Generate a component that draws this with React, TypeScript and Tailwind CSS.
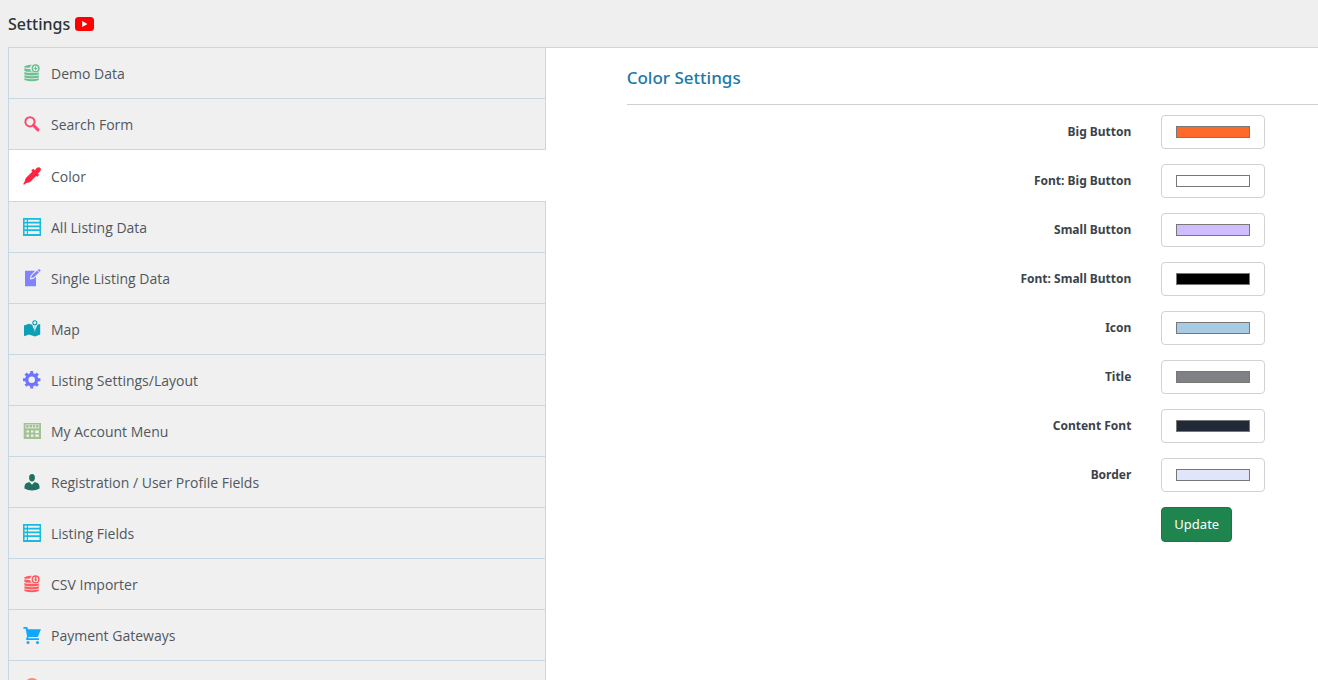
import React from "react";

type IconProps = { children: React.ReactNode; color: string };

function Icon({ children, color }: IconProps) {
  return (
    <svg viewBox="0 0 18 18" className="size-[18px] shrink-0" fill={color} stroke="none" style={{ color }} aria-hidden="true">
      {children}
    </svg>
  );
}

const Coins = ({ plus }: { plus: boolean }) => (
  <>
    <path d="M1.4 2.2Q4 .4 8.8 .7Q7.2 2.2 7.1 3.4Q4 4 1.4 3.4Z" />
    <path d="M1.4 4.3Q4 5.2 7.2 4.9Q7.6 6.8 9 7.8Q4 8.1 1.4 7Z" />
    <path d="M1.4 7.9Q5 9.2 9.6 8.6Q13 9.8 15.8 8.2V10.6Q9 12.6 1.4 10.6Z" />
    <path d="M1.4 11.3Q9 13.4 15.8 11.3V13.5Q9 15.6 1.4 13.5Z" />
    <path d="M1.4 14.2Q9 16.4 15.8 14.2V15.9Q9 18.8 1.4 15.9Z" />
    <circle cx="12.6" cy="4.4" r="3.3" fill="none" stroke="currentColor" strokeWidth="1.5" />
    {plus ? (
      <path d="M12 2.6h1.1v1.3h1.4V5H13.1v1.3H12V5h-1.4V3.9H12Z" />
    ) : (
      <path d="M11.9 1.5h1.5v3h1l-1.8 2-1.7-2h1Z" />
    )}
  </>
);

const Listing = () => (
  <path
    fillRule="evenodd"
    d="M0 0h18v18H0ZM1.6 1.7v2h2.2v-2Zm3.4 0v2h11.5v-2ZM1.6 5.5v2h2.2v-2Zm3.4 0v2h11.5v-2ZM1.6 9.3v2h2.2v-2Zm3.4 0v2h11.5v-2ZM1.6 13.1v3h2.2v-3Zm3.4 0v3h11.5v-3Z"
  />
);

const icons = {
  demo: <Icon color="#6cc091"><Coins plus /></Icon>,
  search: (
    <Icon color="#fa4a70">
      <circle cx="7" cy="6.8" r="4.6" fill="none" stroke="currentColor" strokeWidth="2" />
      <path d="M10.4 10.2 15 14.9" fill="none" stroke="currentColor" strokeWidth="3" strokeLinecap="round" />
    </Icon>
  ),
  dropper: (
    <Icon color="#ff2440">
      <path d="M8.3 3.4 10.3 1.8 12 3.2 13.6 1Q16-.3 17.4 1Q18.6 2.7 17 4.6L14.8 6.4 16 7.8 14.6 9.7 13.2 9 6.8 15.3 3.4 16.1 1 17.7.2 16.9 1.7 14.6 2.6 11.2 9.2 4.7Z" />
    </Icon>
  ),
  listing: <Icon color="#18badd"><Listing /></Icon>,
  edit: (
    <Icon color="#7f83ff">
      <path d="M2 1.8H12.1L7.6 6.5 7 10.4 10.9 9.8 13 7.6V17.3H2Z" />
      <path d="M8.2 9.1 8.7 6.8 14 1.5 15.9 3.4 10.6 8.6ZM14.6.9Q15.5 0 16.8.5L17.8 1.5 16.4 2.9Z" />
    </Icon>
  ),
  map: (
    <Icon color="#0c9fb5">
      <path d="M1 5.4 6 3.8 9.2 4.8Q10 8 11.7 10.2Q13.8 7.4 14.4 4.8L17.2 4V14.6L12 16.4 6 14.6 1 16.3Z" />
      <circle cx="11.8" cy="2.8" r="2" fill="none" stroke="currentColor" strokeWidth="1.1" />
      <path d="M11.3 5h1v6.5h-1Z" fill="#a7d2d8" />
    </Icon>
  ),
  gear: (
    <Icon color="#6f74ff">
      <circle cx="8.7" cy="8.7" r="5" fill="none" stroke="currentColor" strokeWidth="3.4" />
      <path d="M8.7 0V3M8.7 14.4v3M0 8.7H3M14.4 8.7h3M2.6 2.6l2 2M12.8 12.8l2 2M2.6 14.8l2-2M12.8 4.6l2-2" fill="none" stroke="currentColor" strokeWidth="3" />
    </Icon>
  ),
  account: (
    <Icon color="#a3c293">
      <path
        fillRule="evenodd"
        d="M.7 1H18V17H.7ZM2.5 2.4V6.2H16.2V2.4ZM3.5 8.6V10.4H6V8.6ZM8 8.6V10.4H10.4V8.6ZM12.2 8.6V11H15.8V8.6ZM3.5 12.4V14.8H6V12.4ZM8 12.4V14.8H10.4V12.4ZM12.2 12.4V14.8H15.8V12.4Z"
      />
      <path d="M3.1 3h2.6v2.6H3.1ZM6.4 3H9v2.6H6.4ZM9.7 3h2.6v2.6H9.7ZM13 3h2.6v2.6H13Z" />
    </Icon>
  ),
  user: (
    <Icon color="#216f61">
      <ellipse cx="9" cy="4.8" rx="2.9" ry="3.7" />
      <path d="M6.3 8.9 9 11.8 11.7 8.9 14.9 10.3Q16.6 11.3 16.6 15.5Q13 17.5 9 17.5T1.4 15.5Q1.4 11.3 3.1 10.3Z" />
    </Icon>
  ),
  csv: <Icon color="#ff5a5f"><Coins plus={false} /></Icon>,
  cart: (
    <Icon color="#10a8ff">
      <path d="M.4 1H4.2L5 3.3H18L14.8 11.1H5.6L5.1 12.2H16V14H3.6Q2.7 13.7 3.2 12.5L4.1 10.7 2.7 2.7H.4Z" />
      <circle cx="5" cy="16.4" r="1.5" />
      <circle cx="14.5" cy="16.4" r="1.5" />
    </Icon>
  ),
  more: <Icon color="#f08f83"><circle cx="9" cy="9" r="8" /></Icon>,
};

const items = [
  { label: "Demo Data", icon: icons.demo },
  { label: "Search Form", icon: icons.search },
  { label: "Color", icon: icons.dropper, active: true },
  { label: "All Listing Data", icon: icons.listing },
  { label: "Single Listing Data", icon: icons.edit },
  { label: "Map", icon: icons.map },
  { label: "Listing Settings/Layout", icon: icons.gear },
  { label: "My Account Menu", icon: icons.account },
  { label: "Registration / User Profile Fields", icon: icons.user },
  { label: "Listing Fields", icon: icons.listing },
  { label: "CSV Importer", icon: icons.csv },
  { label: "Payment Gateways", icon: icons.cart },
  { label: "", icon: icons.more },
];

const colors = [
  { id: "big-button", label: "Big Button", value: "#ff6a2b" },
  { id: "big-button-font", label: "Font: Big Button", value: "#ffffff" },
  { id: "small-button", label: "Small Button", value: "#cfbdff" },
  { id: "small-button-font", label: "Font: Small Button", value: "#000000" },
  { id: "icon", label: "Icon", value: "#a6cbe2" },
  { id: "title", label: "Title", value: "#808185" },
  { id: "content-font", label: "Content Font", value: "#212938" },
  { id: "border", label: "Border", value: "#e0e5f9" },
];

export default function App() {
  return (
    <div className="flex h-screen flex-col overflow-hidden bg-[#efefef] pl-2 font-['Noto_Sans',sans-serif] text-[#50575e]">
      <header className="flex h-[47px] shrink-0 items-center gap-[5px]">
        <h1 className="text-[16px] font-medium text-[#2c3338]">Settings</h1>
        <a href="#video" aria-label="Video tutorial">
          <svg viewBox="0 0 19 14" className="h-[14px] w-[19px]" aria-hidden="true">
            <rect width="19" height="14" rx="3.5" fill="#f00" />
            <path d="M7.2 4 12.5 7 7.2 10Z" fill="#fff" />
          </svg>
        </a>
      </header>

      <div className="flex min-h-0 flex-1 border-t border-l border-[#c6d8e4] bg-white">
        <nav className="w-[41%] shrink-0 font-['Open_Sans',sans-serif]">
          {items.map((item, i) => (
            <a
              key={i}
              href="#section"
              aria-current={item.active ? "page" : undefined}
              className={
                item.active
                  ? "flex h-[52px] items-center gap-[10px] border-b border-[#c6d8e4] bg-white pl-[14px] text-[14px]"
                  : "flex h-[51px] items-center gap-[10px] border-r border-b border-[#c6d8e4] bg-[#f0f0f0] pl-[14px] text-[14px]"
              }
            >
              {item.icon}
              <span className="pt-px">{item.label}</span>
            </a>
          ))}
        </nav>

        <main className="min-w-0 flex-1 pl-[81px]">
          <h2 className="border-b border-[#cfcfd1] pt-[18px] pb-[14px] text-[17px] leading-6 font-medium text-[#2078a8]">
            Color Settings
          </h2>
          <form className="flex flex-col gap-[15px] pt-[10px]" onSubmit={(e) => e.preventDefault()}>
            {colors.map((c) => (
              <div key={c.id} className="flex h-[34px] items-center gap-[30px]">
                <label htmlFor={c.id} className="w-[73%] text-right text-[12px] font-bold text-[#3c434a]">
                  {c.label}
                </label>
                <input
                  id={c.id}
                  type="color"
                  defaultValue={c.value}
                  className="h-[34px] w-[104px] rounded border border-[#d2d2d2] bg-white px-3 py-[6px]"
                />
              </div>
            ))}
            <div className="flex gap-[30px]">
              <div className="w-[73%]" />
              <button type="submit" className="h-[35px] rounded border border-[#1b7544] bg-[#1f854e] px-3 text-[13px] text-white">
                Update
              </button>
            </div>
          </form>
        </main>
      </div>
    </div>
  );
}
